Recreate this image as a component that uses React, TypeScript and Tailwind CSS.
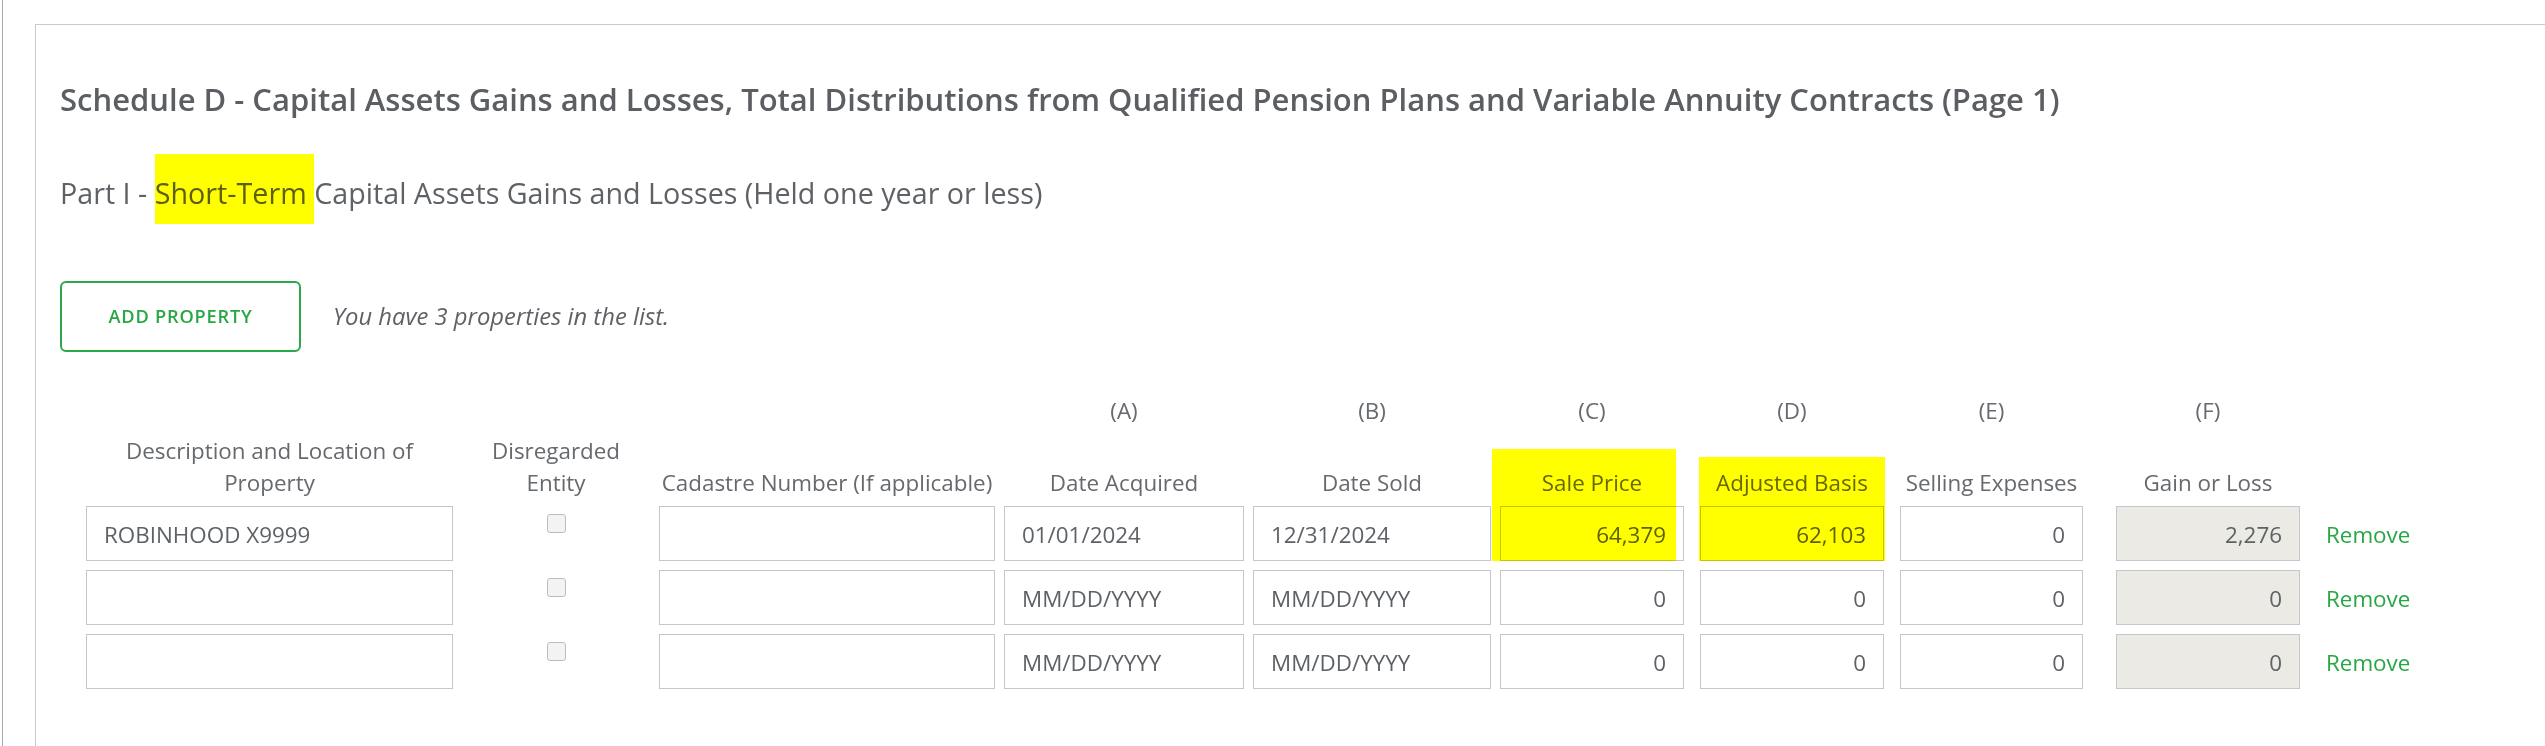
import React from "react";

const W = [
  "w-[367px]",
  "w-[206px]",
  "w-[336px]",
  "w-[240px]",
  "w-[238px]",
  "w-[184px]",
  "w-[184px]",
  "w-[183px]",
  "w-[184px]",
];

const COLS =
  "grid grid-cols-[367px_206px_345px_249px_247px_200px_200px_216px_210px_1fr]";

const letters = ["", "", "", "(A)", "(B)", "(C)", "(D)", "(E)", "(F)"];
const labels: React.ReactNode[] = [
  <>Description and Location of<br />Property</>,
  <>Disregarded<br />Entity</>,
  "Cadastre Number (If applicable)",
  "Date Acquired",
  "Date Sold",
  "Sale Price",
  "Adjusted Basis",
  "Selling Expenses",
  "Gain or Loss",
];

type Row = {
  desc: string;
  acq: string;
  sold: string;
  sale: string;
  adj: string;
  sell: string;
  gain: string;
};

const rows: Row[] = [
  { desc: "ROBINHOOD X9999", acq: "01/01/2024", sold: "12/31/2024", sale: "64,379", adj: "62,103", sell: "0", gain: "2,276" },
  { desc: "", acq: "MM/DD/YYYY", sold: "MM/DD/YYYY", sale: "0", adj: "0", sell: "0", gain: "0" },
  { desc: "", acq: "MM/DD/YYYY", sold: "MM/DD/YYYY", sale: "0", adj: "0", sell: "0", gain: "0" },
];

function Box({ w, text, right, gray }: { w: string; text: string; right?: boolean; gray?: boolean }) {
  return (
    <div
      className={`${w} h-[55px] border border-[#c3c7cb] flex items-center px-[17px] pt-[2px] text-[22.4px] text-[#5e6266] ${
        right ? "justify-end" : "justify-start"
      } ${gray ? "bg-[#ebeae4]" : "bg-white"}`}
    >
      {text}
    </div>
  );
}

export default function App() {
  return (
    <div className="min-h-screen bg-white flex font-['Open_Sans',sans-serif] text-[#5e6266]">
      <div className="w-[2px] shrink-0" />
      <div className="flex-1 border-l border-[#9fabb3] pt-[24px] pl-[32px]">
        <div className="border-t border-l border-[#c8cbcf] pl-[24px] pt-[56px] pb-[60px]">
          <h1 className="text-[31px] leading-[36px] font-semibold text-[#5b5f63] whitespace-nowrap">
            Schedule D - Capital Assets Gains and Losses, Total Distributions from Qualified Pension Plans and Variable Annuity Contracts (Page 1)
          </h1>
          <h2 className="mt-[58px] text-[28.7px] leading-[36px] text-[#5e6266] whitespace-nowrap">
            Part I -{" "}
            <span className="bg-[#ffff00] pt-[19px] pb-[12px] text-[#5e5e10]">Short-Term </span>
            Capital Assets Gains and Losses (Held one year or less)
          </h2>

          <div className="mt-[70px] flex items-center gap-[32px]">
            <button className="w-[241px] h-[71px] border-2 border-[#2aa84a] rounded-[6px] bg-white text-[#28a745] text-[18.2px] font-semibold tracking-[0.8px]">
              ADD PROPERTY
            </button>
            <span className="italic text-[23.8px] text-[#5e6266]">You have 3 properties in the list.</span>
          </div>

          <div className="relative mt-[43px] ml-[26px]">
            <div className={COLS}>
              {letters.map((l, i) => (
                <div key={i} className={`${W[i]} h-[32px] text-center text-[22.4px] leading-[32px] text-[#66696d]`}>
                  {l}
                </div>
              ))}
              <div />
            </div>
            <div className={`${COLS} mt-[8px] items-end`}>
              {labels.map((l, i) => (
                <div key={i} className={`${W[i]} text-center text-[22.4px] leading-[32px] text-[#66696d] whitespace-nowrap`}>
                  {l}
                </div>
              ))}
              <div />
            </div>
            <div className="mt-[7px] flex flex-col gap-[9px]">
              {rows.map((r, i) => (
                <div key={i} className={COLS}>
                  <Box w={W[0]} text={r.desc} />
                  <div className={`${W[1]} flex justify-center pt-[8px]`}>
                    <div className="w-[19px] h-[19px] rounded-[3px] border border-[#bdbdbd] bg-[#f3f3f3]" />
                  </div>
                  <Box w={W[2]} text="" />
                  <Box w={W[3]} text={r.acq} />
                  <Box w={W[4]} text={r.sold} />
                  <Box w={W[5]} text={r.sale} right />
                  <Box w={W[6]} text={r.adj} right />
                  <Box w={W[7]} text={r.sell} right />
                  <Box w={W[8]} text={r.gain} right gray />
                  <div className="h-[55px] flex items-center pt-[2px] text-[22.4px] text-[#28a745]">Remove</div>
                </div>
              ))}
            </div>

            <div className="absolute left-[1406px] top-[54px] w-[184px] h-[112px] bg-[#ffff00] mix-blend-multiply pointer-events-none" />
            <div className="absolute left-[1613px] top-[62px] w-[186px] h-[104px] bg-[#ffff00] mix-blend-multiply pointer-events-none" />
          </div>
        </div>
      </div>
    </div>
  );
}
